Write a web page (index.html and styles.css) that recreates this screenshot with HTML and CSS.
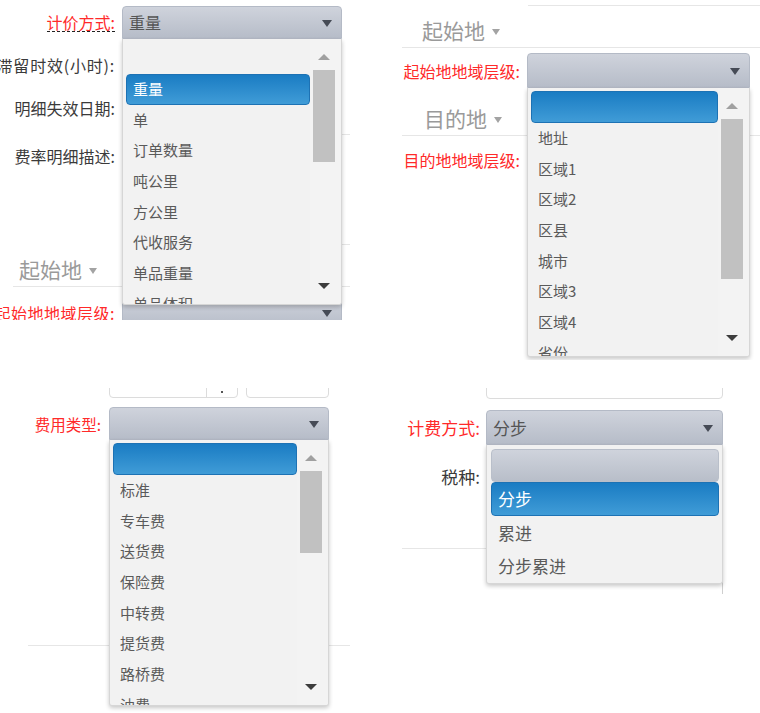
FILE: index.html
```html
<!DOCTYPE html>
<html lang="zh-CN">
<head>
    <meta charset="UTF-8">
    <title>下拉框截图</title>
    <link rel="stylesheet" href="styles.css">
</head>
<body>
<div class="collage">

    <div class="col col-left">
        <!-- 计价方式 -->
        <section class="shot shot-a">
            <div class="row row-a1">
                <div class="lbl req"><span class="tip">计价方式:</span></div>
                <div class="field">
                    <div class="select open">重量</div>
                    <div class="drop drop-a">
                        <div class="opts">
                            <div class="opt blank"></div>
                            <div class="opt on">重量</div>
                            <div class="opt">单</div>
                            <div class="opt">订单数量</div>
                            <div class="opt">吨公里</div>
                            <div class="opt">方公里</div>
                            <div class="opt">代收服务</div>
                            <div class="opt">单品重量</div>
                            <div class="opt">单品体积</div>
                        </div>
                        <div class="bar">
                            <i class="up"></i>
                            <i class="thumb thumb-a"></i>
                            <i class="down"></i>
                        </div>
                    </div>
                </div>
            </div>
            <div class="row row-a2"><div class="lbl">滞留时效(小时):</div></div>
            <div class="row row-a3"><div class="lbl">明细失效日期:</div></div>
            <div class="rule rule-a1"></div>
            <div class="row row-a4"><div class="lbl">费率明细描述:</div></div>
            <div class="rule rule-a2"></div>
            <div class="head head-a">起始地<i class="caret"></i></div>
            <div class="rule rule-a3"></div>
            <div class="row row-a5">
                <div class="lbl req">起始地地域层级:</div>
                <div class="field"><div class="select"></div></div>
            </div>
        </section>

        <!-- 费用类型 -->
        <section class="shot shot-c">
            <div class="row row-c0">
                <div class="lbl"></div>
                <div class="field boxes">
                    <div class="box box-date"><span class="spin"></span></div>
                    <div class="box box-time"></div>
                </div>
            </div>
            <div class="row row-c1">
                <div class="lbl req">费用类型:</div>
                <div class="field">
                    <div class="select open"></div>
                    <div class="drop drop-c">
                        <div class="opts">
                            <div class="opt blank on"></div>
                            <div class="opt">标准</div>
                            <div class="opt">专车费</div>
                            <div class="opt">送货费</div>
                            <div class="opt">保险费</div>
                            <div class="opt">中转费</div>
                            <div class="opt">提货费</div>
                            <div class="opt">路桥费</div>
                            <div class="opt">油费</div>
                        </div>
                        <div class="bar">
                            <i class="up"></i>
                            <i class="thumb thumb-c"></i>
                            <i class="down"></i>
                        </div>
                    </div>
                </div>
            </div>
            <div class="rule rule-c1"></div>
        </section>
    </div>

    <div class="col col-right">
        <!-- 起始地 / 目的地 -->
        <section class="shot shot-b">
            <div class="rule rule-b0"></div>
            <div class="head head-b1">起始地<i class="caret"></i></div>
            <div class="rule rule-b1"></div>
            <div class="row row-b1">
                <div class="lbl req">起始地地域层级:</div>
                <div class="field">
                    <div class="select open"></div>
                    <div class="drop drop-b">
                        <div class="opts">
                            <div class="opt blank on"></div>
                            <div class="opt">地址</div>
                            <div class="opt">区域1</div>
                            <div class="opt">区域2</div>
                            <div class="opt">区县</div>
                            <div class="opt">城市</div>
                            <div class="opt">区域3</div>
                            <div class="opt">区域4</div>
                            <div class="opt">省份</div>
                        </div>
                        <div class="bar">
                            <i class="up"></i>
                            <i class="thumb thumb-b"></i>
                            <i class="down"></i>
                        </div>
                    </div>
                </div>
            </div>
            <div class="head head-b2">目的地<i class="caret"></i></div>
            <div class="rule rule-b2"></div>
            <div class="row row-b2">
                <div class="lbl req">目的地地域层级:</div>
                <div class="field"><div class="select"></div></div>
            </div>
        </section>

        <!-- 计费方式 -->
        <section class="shot shot-d">
            <div class="row row-d0">
                <div class="lbl"></div>
                <div class="field"><div class="box"></div></div>
            </div>
            <div class="row row-d1">
                <div class="lbl req">计费方式:</div>
                <div class="field">
                    <div class="select open">分步</div>
                    <div class="drop drop-d">
                        <div class="opts">
                            <div class="search"></div>
                            <div class="opt on">分步</div>
                            <div class="opt">累进</div>
                            <div class="opt">分步累进</div>
                        </div>
                    </div>
                </div>
            </div>
            <div class="row row-d2"><div class="lbl">税种:</div></div>
            <div class="rule rule-d1"></div>
            <div class="row row-d3">
                <div class="lbl"></div>
                <div class="field"><div class="edge"></div></div>
            </div>
        </section>
    </div>

</div>
</body>
</html>
```

FILE: styles.css
```css
* {
    box-sizing: border-box;
}

body {
    margin: 0;
    width: 760px;
    height: 713px;
    overflow: hidden;
    background: #fff;
    font-family: "Noto Sans CJK SC", "Microsoft YaHei", sans-serif;
    color: #333;
}

.collage {
    display: flex;
    gap: 50px;
}

.col {
    display: flex;
    flex-direction: column;
}
.col-left {
    width: 350px;
}
.col-right {
    width: 360px;
}

.shot {
    position: relative;
    overflow: hidden;
    flex-shrink: 0;
}
.shot-a { height: 320px; }
.shot-c { height: 325px; margin-top: 68px; }
.shot-b { height: 360px; }
.shot-d { height: 212px; margin-top: 28px; }

/* 表单行 */
.row {
    display: flex;
    align-items: center;
    height: 33px;
}
.lbl {
    display: flex;
    justify-content: flex-end;
    flex-shrink: 0;
    width: 115px;
    white-space: nowrap;
    font-size: 16px;
    line-height: 20px;
    color: #3a3a3a;
}
.lbl.req {
    color: #ff2a2a;
}
.lbl .tip {
    border-bottom: 1px dashed #222;
    line-height: 18px;
}
.field {
    position: relative;
    flex-shrink: 0;
    width: 220px;
    margin-left: 7px;
}

.rule {
    height: 1px;
    background: #e6e6e6;
}

.head {
    display: flex;
    align-items: center;
    height: 34px;
    font-size: 21px;
    color: #9a9a9a;
}
.caret {
    width: 0;
    height: 0;
    margin: 4px 0 0 7px;
    border-left: 4px solid transparent;
    border-right: 4px solid transparent;
    border-top: 6px solid #a3a3a3;
}

/* 选择框 */
.select {
    position: relative;
    height: 33px;
    padding-left: 6px;
    border: 1px solid #b4bac6;
    border-radius: 4px;
    background: linear-gradient(#cfd3dc, #b6bcc8);
    font-size: 16px;
    line-height: 31px;
    color: #555;
}
.select.open {
    border-radius: 4px 4px 0 0;
}
.select::after {
    content: "";
    position: absolute;
    right: 9px;
    top: 50%;
    margin-top: -3px;
    border-left: 5px solid transparent;
    border-right: 5px solid transparent;
    border-top: 7px solid #464b56;
}

.box {
    height: 33px;
    border: 1px solid #dcdcdc;
    border-radius: 4px;
    background: #fff;
}

/* 下拉列表 */
.drop {
    position: absolute;
    left: 0;
    top: 100%;
    z-index: 2;
    display: flex;
    width: 100%;
    background: #f2f2f2;
    border: 1px solid #d6d6d6;
    border-top: none;
    border-radius: 0 0 3px 3px;
    box-shadow: 0 2px 4px rgba(0, 0, 0, .22);
    overflow: hidden;
}
.opts {
    flex: 1;
    min-width: 0;
    padding: 3px 0 0 3px;
}
.opt {
    height: 30.67px;
    padding-left: 6px;
    border: 1px solid transparent;
    border-radius: 4px;
    font-size: 15px;
    line-height: 28.67px;
    color: #5a5a5a;
    white-space: nowrap;
}
.opt.blank {
    height: 32px;
}
.opt.on {
    background: linear-gradient(#1a7cc3, #409cd7);
    border-color: #1d72b4;
    color: #fff;
}

.bar {
    display: flex;
    flex-direction: column;
    align-items: center;
    flex-shrink: 0;
    width: 31px;
    padding: 0 6px 0 3px;
    background: #f3f3f3;
}
.bar .up {
    margin-top: 15px;
    border-left: 6px solid transparent;
    border-right: 6px solid transparent;
    border-bottom: 6px solid #a0a0a0;
}
.bar .thumb {
    width: 22px;
    margin-top: 10px;
    background: #c1c1c1;
}
.bar .down {
    margin-top: auto;
    margin-bottom: 15px;
    border-left: 6px solid transparent;
    border-right: 6px solid transparent;
    border-top: 6px solid #3c3c3c;
}

/* 图一：计价方式 */
.row-a1 { margin-top: 6px; }
.row-a2 { margin-top: 9px; }
.row-a2 .lbl { letter-spacing: 0.8px; }
.row-a3 { margin-top: 10px; }
.rule-a1 { margin: 10px 0 0 122px; }
.row-a4 { margin-top: 4px; }
.rule-a2 { margin: 72px 0 0 122px; }
.head-a { margin-top: 7px; padding-left: 19px; }
.rule-a3 { margin-left: 13px; }
.row-a5 { margin-top: 9px; }
.row-a5 .lbl { letter-spacing: 0.5px; }
.drop-a { height: 266px; }
.thumb-a { height: 92px; background: #a8a8a8; }

/* 图二：起始地/目的地 */
.shot-b .lbl { width: 120px; }
.shot-b .field { width: 223px; }
.rule-b0 { margin: 5px 0 0 128px; }
.head-b1 { margin-top: 7px; padding-left: 22px; }
.rule-b1 { margin-left: 2px; }
.row-b1 { margin-top: 5px; height: 35px; }
.row-b1 .select { height: 35px; line-height: 33px; }
.head-b2 { margin-top: 13px; padding-left: 24px; }
.rule-b2 { margin-left: 2px; }
.row-b2 { margin-top: 6px; height: 35px; }
.row-b2 .select { height: 35px; }
.drop-b { height: 269px; }
.thumb-b { height: 160px; }

/* 图三：费用类型 */
.shot-c .lbl { width: 101px; font-size: 15.5px; }
.shot-c .field { margin-left: 8px; }
.row-c0 { margin-top: -23px; }
.boxes {
    display: flex;
    gap: 8px;
}
.box-date {
    position: relative;
    width: 129px;
}
.box-date .spin {
    position: absolute;
    right: 0;
    top: 0;
    width: 31px;
    height: 100%;
    border-left: 1px solid #dcdcdc;
}
.box-date .spin::after {
    content: "";
    position: absolute;
    left: 14px;
    bottom: 4px;
    width: 2px;
    height: 2px;
    background: #555;
}
.box-time {
    width: 83px;
}
.row-c1 { margin-top: 9px; }
.rule-c1 { margin: 205px 0 0 28px; }
.drop-c { height: 266px; }
.thumb-c { height: 82px; }

/* 图四：计费方式 */
.shot-d .lbl { width: 80px; font-size: 17px; }
.shot-d .field { width: 237px; margin-left: 6px; }
.row-d0 { margin-top: -24px; height: 35px; }
.row-d0 .box { height: 35px; }
.row-d1 { margin-top: 11px; height: 35px; }
.row-d1 .select {
    height: 35px;
    font-size: 17px;
    line-height: 33px;
}
.row-d2 { margin-top: 14px; height: 35px; }
.rule-d1 { width: 84px; margin: 54px 0 0 2px; }
.row-d3 { margin-top: 20px; height: 25px; }
.edge {
    width: 237px;
    height: 25px;
    border-right: 1px solid #cfcfcf;
}
.drop-d { height: 139px; }
.drop-d .opts { padding: 4px 3px 0 4px; }
.drop-d .opt {
    height: 33.5px;
    font-size: 17px;
    line-height: 31.5px;
}
.search {
    height: 33px;
    border: 1px solid #b9bfca;
    border-radius: 4px;
    background: linear-gradient(#cfd3dc, #b8bec9);
}
```
